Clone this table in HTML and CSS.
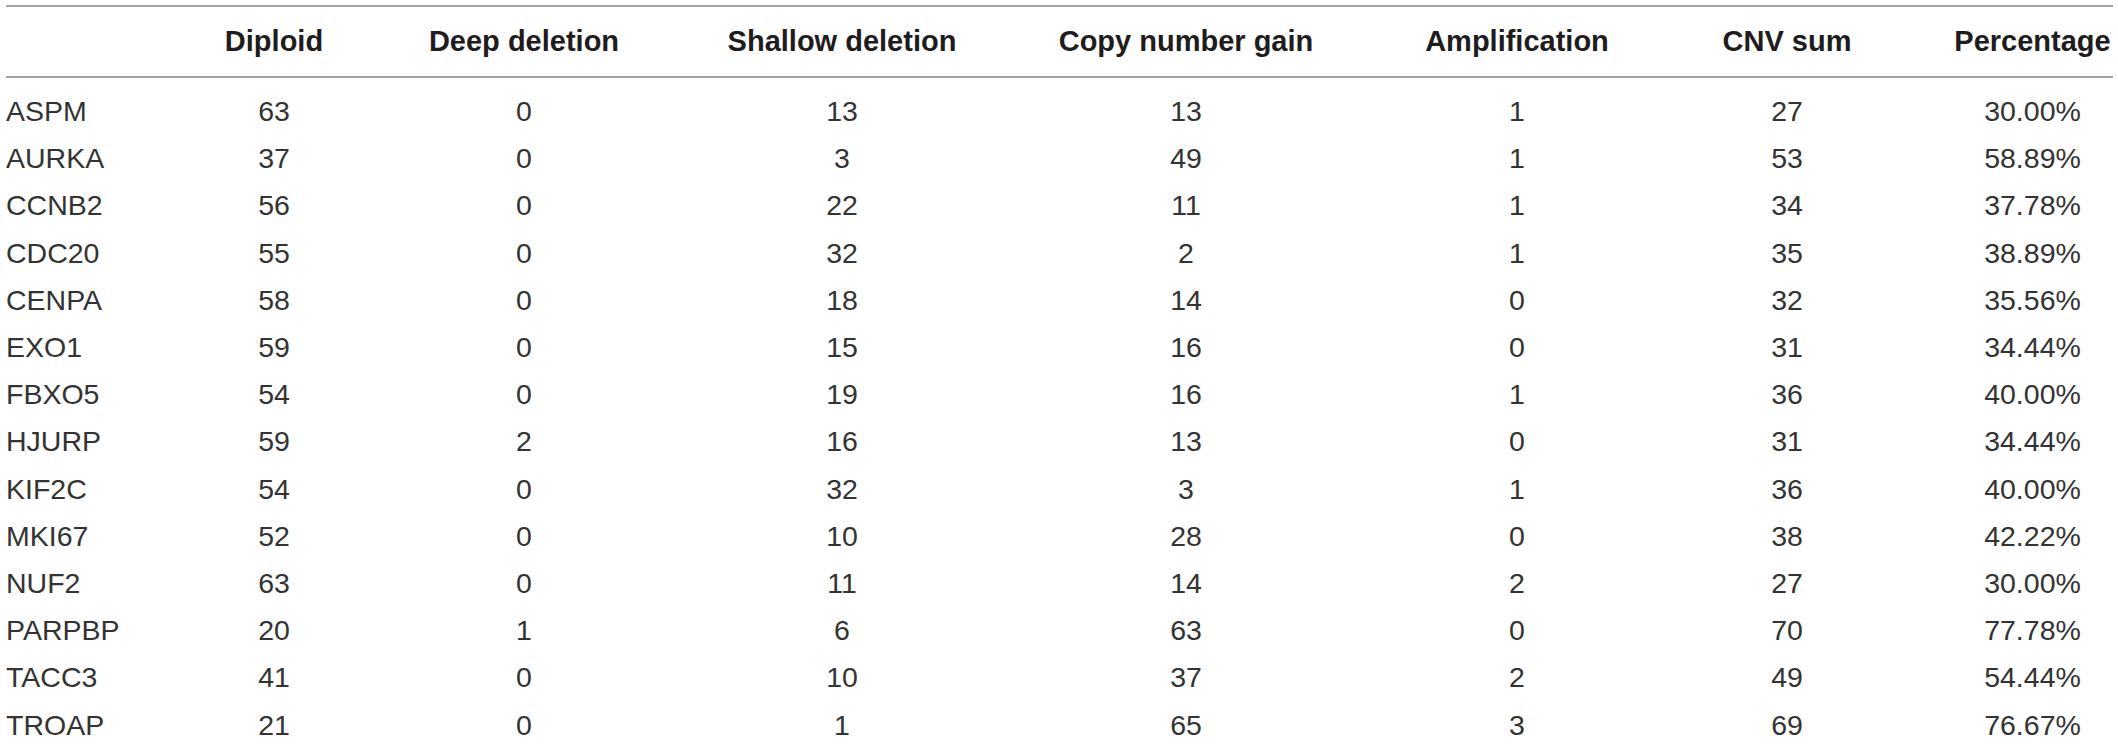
FILE: index.html
```html
<!DOCTYPE html>
<html>
<head>
<meta charset="utf-8">
<link rel="stylesheet" href="styles.css">
</head>
<body>
<table class="cnv">
  <colgroup>
    <col class="c-gene"><col class="c-dip"><col class="c-deep"><col class="c-shallow"><col class="c-gain"><col class="c-amp"><col class="c-sum"><col class="c-pct">
  </colgroup>
  <thead>
    <tr>
      <th class="gene"></th>
      <th>Diploid</th>
      <th>Deep deletion</th>
      <th>Shallow deletion</th>
      <th>Copy number gain</th>
      <th>Amplification</th>
      <th>CNV sum</th>
      <th>Percentage</th>
    </tr>
  </thead>
  <tbody>
    <tr><td class="gene">ASPM</td><td>63</td><td>0</td><td>13</td><td>13</td><td>1</td><td>27</td><td>30.00%</td></tr>
    <tr><td class="gene">AURKA</td><td>37</td><td>0</td><td>3</td><td>49</td><td>1</td><td>53</td><td>58.89%</td></tr>
    <tr><td class="gene">CCNB2</td><td>56</td><td>0</td><td>22</td><td>11</td><td>1</td><td>34</td><td>37.78%</td></tr>
    <tr><td class="gene">CDC20</td><td>55</td><td>0</td><td>32</td><td>2</td><td>1</td><td>35</td><td>38.89%</td></tr>
    <tr><td class="gene">CENPA</td><td>58</td><td>0</td><td>18</td><td>14</td><td>0</td><td>32</td><td>35.56%</td></tr>
    <tr><td class="gene">EXO1</td><td>59</td><td>0</td><td>15</td><td>16</td><td>0</td><td>31</td><td>34.44%</td></tr>
    <tr><td class="gene">FBXO5</td><td>54</td><td>0</td><td>19</td><td>16</td><td>1</td><td>36</td><td>40.00%</td></tr>
    <tr><td class="gene">HJURP</td><td>59</td><td>2</td><td>16</td><td>13</td><td>0</td><td>31</td><td>34.44%</td></tr>
    <tr><td class="gene">KIF2C</td><td>54</td><td>0</td><td>32</td><td>3</td><td>1</td><td>36</td><td>40.00%</td></tr>
    <tr><td class="gene">MKI67</td><td>52</td><td>0</td><td>10</td><td>28</td><td>0</td><td>38</td><td>42.22%</td></tr>
    <tr><td class="gene">NUF2</td><td>63</td><td>0</td><td>11</td><td>14</td><td>2</td><td>27</td><td>30.00%</td></tr>
    <tr><td class="gene">PARPBP</td><td>20</td><td>1</td><td>6</td><td>63</td><td>0</td><td>70</td><td>77.78%</td></tr>
    <tr><td class="gene">TACC3</td><td>41</td><td>0</td><td>10</td><td>37</td><td>2</td><td>49</td><td>54.44%</td></tr>
    <tr><td class="gene">TROAP</td><td>21</td><td>0</td><td>1</td><td>65</td><td>3</td><td>69</td><td>76.67%</td></tr>
  </tbody>
</table>
</body>
</html>
```

FILE: styles.css
```css
html, body {
  margin: 0;
  background: #ffffff;
}

body {
  padding: 5px 0 0 6px;
  font-family: "Liberation Sans", Arial, sans-serif;
  overflow: hidden;
}

.cnv {
  border-collapse: collapse;
  table-layout: fixed;
  width: 2107px;
}

.c-gene { width: 218px; }
.c-dip { width: 100px; }
.c-deep { width: 400px; }
.c-shallow { width: 236px; }
.c-gain { width: 452px; }
.c-amp { width: 210px; }
.c-sum { width: 330px; }
.c-pct { width: 161px; }

.cnv th {
  font-weight: bold;
  font-size: 29px;
  line-height: 47px;
  color: #1f1c1d;
  text-align: center;
  white-space: nowrap;
  padding: 11px 0 11px 0;
  border-top: 2px solid #a3a3a3;
  border-bottom: 2px solid #a3a3a3;
}

.cnv td {
  font-size: 28.5px;
  line-height: 47.2px;
  color: #333333;
  text-align: center;
  white-space: nowrap;
  padding: 0;
}

.cnv tbody tr:first-child td {
  padding-top: 10px;
}

.cnv .gene {
  text-align: left;
}
```
